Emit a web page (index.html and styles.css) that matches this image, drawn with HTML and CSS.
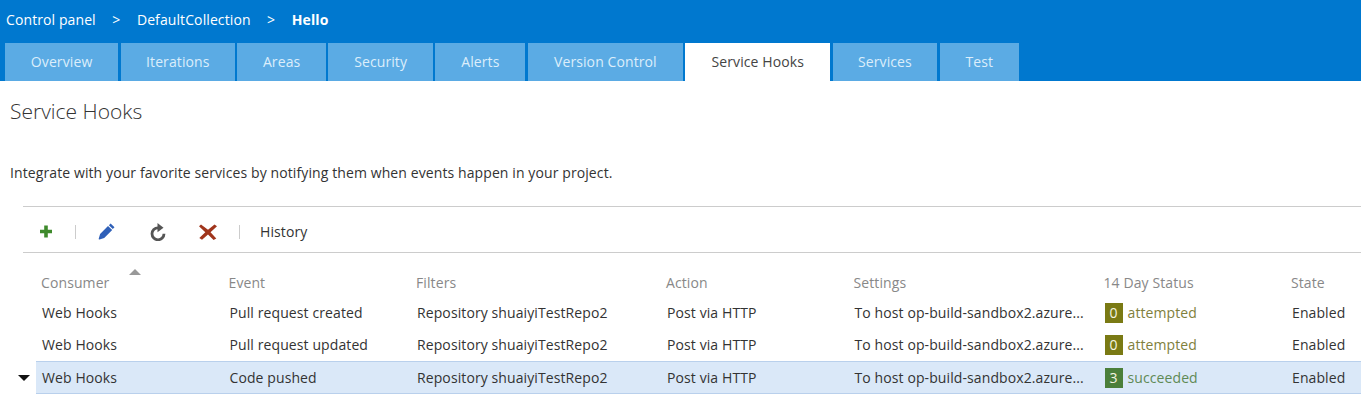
FILE: index.html
```html
<!DOCTYPE html>
<html>
<head>
    <meta charset="utf-8">
    <title>Service Hooks</title>
    <link rel="stylesheet" href="styles.css">
</head>
<body>
    <div class="topbar">
        <div class="crumbs">
            <a class="crumb">Control panel</a>
            <span class="crumb-sep">&gt;</span>
            <a class="crumb">DefaultCollection</a>
            <span class="crumb-sep">&gt;</span>
            <a class="crumb crumb-current">Hello</a>
        </div>
        <div class="tabs">
            <a class="tab">Overview</a>
            <a class="tab">Iterations</a>
            <a class="tab">Areas</a>
            <a class="tab">Security</a>
            <a class="tab">Alerts</a>
            <a class="tab">Version Control</a>
            <a class="tab tab-active">Service Hooks</a>
            <a class="tab">Services</a>
            <a class="tab">Test</a>
        </div>
    </div>

    <h1 class="title">Service Hooks</h1>
    <p class="intro">Integrate with your favorite services by notifying them when events happen in your project.</p>

    <div class="toolbar">
        <button class="tool tool-add" title="New">
            <svg width="12" height="13" viewBox="0 0 12 13"><path d="M4.2 0.5h3.600v4.200H12v3.600H7.800v4.200H4.200V8.300H0V4.700h4.200z" fill="#3f8a2c"/></svg>
        </button>
        <span class="tool-sep"></span>
        <button class="tool tool-edit" title="Edit">
            <svg width="17" height="17" viewBox="0 0 17 17"><path d="M12.600 0.500l3.900 3.700-1.700 1.800-3.900-3.700zM10 2.900l4.200 4-8 8.100-4.700 1.500c-.6.200-1-.2-.8-.8l1.400-4.700z" fill="#2f60b8"/></svg>
        </button>
        <button class="tool tool-refresh" title="Refresh">
            <svg width="16" height="18" viewBox="0 0 16 18"><path d="M8 4.800a6 6 0 1 0 6 6" fill="none" stroke="#555" stroke-width="2.800"/><path d="M7.500 0l6 4.800-6 4.400z" fill="#555"/></svg>
        </button>
        <button class="tool tool-delete" title="Delete">
            <svg width="18" height="16" viewBox="0 0 18 16"><path d="M2 0.500l7 5.200 6.500-5.200 2.500 1.800-6.500 5.900 5.800 6.300-2.700 1.500L9 10.500 3 15.800.3 14l6-5.800L0 2.300z" fill="#a0351c"/></svg>
        </button>
        <span class="tool-sep"></span>
        <span class="tool-label">History</span>
    </div>

    <table class="hooks">
        <colgroup>
            <col class="col-gutter">
            <col class="col-short">
            <col class="col-short">
            <col class="col-long">
            <col class="col-short">
            <col class="col-long">
            <col class="col-short">
            <col>
        </colgroup>
        <thead>
            <tr>
                <th></th>
                <th class="sorted">Consumer<span class="sort-arrow"></span></th>
                <th>Event</th>
                <th>Filters</th>
                <th>Action</th>
                <th>Settings</th>
                <th>14 Day Status</th>
                <th>State</th>
            </tr>
        </thead>
        <tbody>
            <tr>
                <td class="gutter"></td>
                <td>Web Hooks</td>
                <td>Pull request created</td>
                <td>Repository shuaiyiTestRepo2</td>
                <td>Post via HTTP</td>
                <td>To host op-build-sandbox2.azure...</td>
                <td><span class="count count-attempted">0</span><span class="status-attempted">attempted</span></td>
                <td>Enabled</td>
            </tr>
            <tr>
                <td class="gutter"></td>
                <td>Web Hooks</td>
                <td>Pull request updated</td>
                <td>Repository shuaiyiTestRepo2</td>
                <td>Post via HTTP</td>
                <td>To host op-build-sandbox2.azure...</td>
                <td><span class="count count-attempted">0</span><span class="status-attempted">attempted</span></td>
                <td>Enabled</td>
            </tr>
            <tr class="selected">
                <td class="gutter"><span class="row-arrow"></span></td>
                <td>Web Hooks</td>
                <td>Code pushed</td>
                <td>Repository shuaiyiTestRepo2</td>
                <td>Post via HTTP</td>
                <td>To host op-build-sandbox2.azure...</td>
                <td><span class="count count-succeeded">3</span><span class="status-succeeded">succeeded</span></td>
                <td>Enabled</td>
            </tr>
        </tbody>
    </table>
</body>
</html>
```

FILE: styles.css
```css
body {
    font-family: "Open Sans", "Noto Sans", sans-serif;
    font-size: 14px;
    letter-spacing: .1px;
    line-height: 18px;
    color: #333;
    background-color: #FFF;
    margin: 0;
    overflow-x: hidden;
}

.topbar {
    background-color: #0078CF;
    height: 81px;
}

.crumbs {
    display: flex;
    align-items: center;
    height: 43px;
    padding: 0 0 4px 6px;
    box-sizing: border-box;
    color: #FFF;
}

.crumb-sep {
    margin: 0 16.5px;
}

.crumb-current {
    font-weight: 700;
}

.tabs {
    display: grid;
    grid-template-columns: 113.2px 114.2px 88.5px 104.5px 90px 155px 144.8px 104.5px 79.3px;
    column-gap: 2.5px;
    padding-left: 5px;
}

.tab {
    height: 38px;
    line-height: 38px;
    text-align: center;
    background-color: #5BABE4;
    color: #DCEEFB;
}

.tab-active {
    background-color: #FFF;
    color: #444;
}

.title {
    font-size: 21px;
    font-weight: 300;
    line-height: 28px;
    color: #333;
    margin: 16px 0 0 10px;
    letter-spacing: 0;
}

.intro {
    margin: 39px 0 0 10px;
    color: #333;
}

.toolbar {
    display: flex;
    align-items: center;
    height: 41px;
    margin: 24px 0 0 23px;
    padding: 4px 0 0 17px;
    border-top: 1px solid #CCC;
    border-bottom: 1px solid #CCC;
}

.tool {
    display: flex;
    padding: 0;
    border: none;
    background: none;
}

.tool-edit {
    margin-right: 35px;
}

.tool-refresh {
    margin-right: 33px;
}

.tool-sep {
    width: 1px;
    height: 14px;
    margin: 0 22px 0 23px;
    background-color: #CCC;
}

.tool-delete + .tool-sep {
    margin-left: 22px;
    margin-right: 20px;
}

.tool-label {
    color: #333;
}

.hooks {
    width: 100%;
    table-layout: fixed;
    border-collapse: collapse;
}

.col-gutter {
    width: 36px;
}

.col-short {
    width: 187.5px;
}

.col-long {
    width: 250px;
}

.hooks th {
    height: 44px;
    padding: 16px 0 0 5px;
    box-sizing: border-box;
    font-weight: 400;
    text-align: left;
    color: #888;
}

.hooks td {
    height: 32px;
    padding: 0 0 0 6px;
    white-space: nowrap;
    overflow: hidden;
}

.hooks .gutter {
    padding: 0;
    position: relative;
}

.sorted {
    position: relative;
}

.sort-arrow {
    position: absolute;
    top: 16px;
    left: 93px;
    border-left: 6px solid transparent;
    border-right: 6px solid transparent;
    border-bottom: 6px solid #999;
}

.row-arrow {
    position: absolute;
    top: 13px;
    left: 18px;
    border-left: 6px solid transparent;
    border-right: 6px solid transparent;
    border-top: 6px solid #111;
}

.hooks .selected td {
    height: 31px;
    background-color: #DAE8F8;
    border-top: 1px solid #B9D0EC;
    border-bottom: 1px solid #B9D0EC;
}

.hooks .selected .gutter {
    background-color: transparent;
    border-color: transparent;
}

.count {
    display: inline-block;
    width: 18px;
    height: 20px;
    line-height: 20px;
    margin-right: 5px;
    text-align: center;
    color: #F4F4E0;
}

.count-attempted {
    background-color: #7A7A14;
}

.count-succeeded {
    background-color: #4B7F3A;
}

.status-attempted {
    color: #80803C;
}

.status-succeeded {
    color: #5F8A55;
}
```
